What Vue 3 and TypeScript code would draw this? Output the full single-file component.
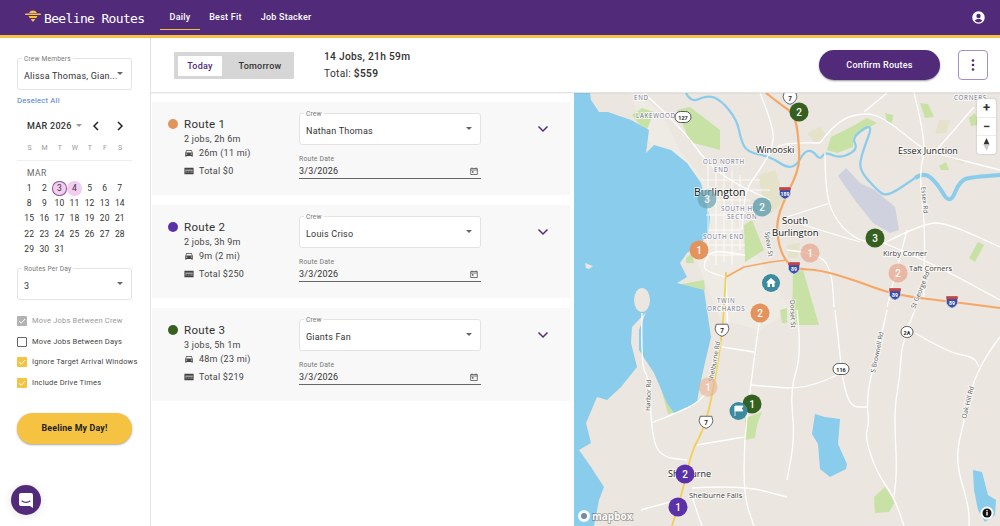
<script setup lang="ts">
type P = [number, number]
const smooth = (p: P[]): string => {
  let d = `M${p[0][0]} ${p[0][1]}`
  for (let i = 1; i < p.length - 1; i++) {
    const mx = (p[i][0] + p[i + 1][0]) / 2
    const my = (p[i][1] + p[i + 1][1]) / 2
    d += ` Q${p[i][0]} ${p[i][1]} ${mx} ${my}`
  }
  const l = p[p.length - 1]
  return d + ` L${l[0]} ${l[1]}`
}
const days = Array.from({ length: 31 }, (_, i) => i + 1)
const routes = [
  { name: 'Route 1', color: '#e4935c', jobs: '2 jobs, 2h 6m', drive: '26m (11 mi)', total: 'Total $0', crew: 'Nathan Thomas' },
  { name: 'Route 2', color: '#5a31a8', jobs: '2 jobs, 3h 9m', drive: '9m (2 mi)', total: 'Total $250', crew: 'Louis Criso' },
  { name: 'Route 3', color: '#35601f', jobs: '3 jobs, 5h 1m', drive: '48m (23 mi)', total: 'Total $219', crew: 'Giants Fan' },
]
const checks = [
  { label: 'Move Jobs Between Crew', state: 'disabled' },
  { label: 'Move Jobs Between Days', state: 'off' },
  { label: 'Ignore Target Arrival Windows', state: 'on' },
  { label: 'Include Drive Times', state: 'on' },
]
const river1 = smooth([[686,93],[691,103],[707,95],[721,100],[737,120],[741,140],[747,152],[771,157],[787,168],[797,165],[804,152],[812,150],[820,160],[825,152],[839,158],[852,153],[857,147],[852,137],[874,122],[862,153],[859,170],[877,190],[887,197],[915,178]])
const river2 = smooth([[915,178],[924,172],[937,183],[950,205],[960,180],[974,177],[1000,175]])
const lake = 'M574 93 L590 93 L591 100 L599 112 L608 112 L631 120 L649 130 L646 153 L654 145 L671 150 L687 163 L701 183 L706 203 L710 217 L708 237 L687 253 L680 263 L687 277 L677 283 L704 290 L707 310 L711 337 L704 367 L699 390 L697 403 L674 413 L667 403 L654 373 L639 350 L639 330 L646 312 L632 327 L631 343 L637 367 L621 387 L607 400 L597 397 L586 423 L591 443 L579 450 L591 467 L604 487 L599 500 L594 526 L574 526 Z'
const greens = [
  '632,115 642,108 654,112 646,132 640,125','677,110 690,107 720,130 720,150 690,142','827,150 831,137 851,127 867,118 877,123 853,137 853,147 837,153',
  '920,103 928,104 934,117 925,118','885,113 893,115 892,123 887,122','939,166 946,162 949,170 941,170','969,118 975,113 979,125 971,126',
  '744,225 752,220 764,250 745,262','686,258 692,253 694,263 686,263','677,285 704,280 705,290 685,290',
  '745,418 762,412 757,425 755,438 745,440','658,378 668,395 676,412 668,414','874,497 885,487 895,502 889,512 875,513',
  '969,258 978,242 984,245 975,262','793,272 803,270 819,325 792,325','780,310 787,308 787,323 782,323',
]
const tans = ['807,133 820,127 827,137 815,143','939,120 950,120 946,133 935,134','758,176 775,170 785,200 770,215 762,195','787,245 800,243 798,258 788,258','898,150 906,155 900,157','957,160 968,159 962,164','956,490 0,0']
const roads = [
  [[887,310],[880,343],[869,383],[867,407],[869,423],[865,438],[877,473],[894,497],[904,526]],
  [[915,310],[902,340],[900,377],[894,410],[897,470],[894,497]],
  [[835,310],[840,353],[842,377],[850,407],[867,407]],
  [[787,388],[807,388],[842,373]],
  [[1000,337],[977,367],[964,420],[955,460],[969,507],[969,526]],
  [[915,333],[947,352],[974,357],[979,367]],
  [[797,310],[802,353],[790,390],[795,437],[787,480]],
  [[759,323],[751,383],[744,440],[744,497],[754,526]],
  [[642,313],[641,367],[649,377],[652,437],[661,457],[687,460]],
  [[651,423],[691,408],[707,393]],
  [[697,445],[744,437]],
  [[722,347],[754,352]],
  [[751,385],[787,388]],
  [[692,488],[741,485],[787,497]],
  [[641,510],[677,500]],
  [[692,497],[702,526]],
  [[644,93],[681,127],[707,163],[734,183],[770,200]],
  [[820,143],[837,120],[867,112],[887,120],[920,147],[934,153],[1000,170]],
  [[914,93],[927,143],[919,173],[925,223],[924,297]],
  [[820,143],[787,142],[771,150],[760,170],[745,190],[742,230]],
  [[887,93],[864,112]],
  [[825,153],[825,193],[837,223],[860,242],[884,243]],
  [[787,217],[830,203]],
  [[787,250],[820,253],[832,273],[834,307]],
  [[787,220],[860,242]],
  [[884,243],[924,223],[947,223],[1000,247]],
  [[907,230],[887,307]],
  [[934,153],[974,107]],
  [[884,243],[930,262],[1000,300]],
  [[726,277],[705,272],[704,262],[712,250],[745,255]],
  [[726,277],[728,330]],
  [[760,93],[775,130],[771,150]],
].map((r) => smooth(r as P[]))
const gridLines = ['M708 165V260','M716 160V265','M724 165V262','M732 170V265','M740 175V250','M702 180H760','M704 190H770','M706 200H750','M706 215H745','M708 230H740','M704 245H745','M712 255H745']
const labels = [
  { x: 636, y: 118, t: 'LAKEWOOD', c: 'hood' },
  { x: 703, y: 164, t: 'OLD NORTH', c: 'hood' },
  { x: 714, y: 172, t: 'END', c: 'hood' },
  { x: 634, y: 99.5, t: 'END', c: 'hood' },
  { x: 721, y: 211, t: 'SOUTH HILL', c: 'hood' },
  { x: 727, y: 219, t: 'SECTION', c: 'hood' },
  { x: 703, y: 239, t: 'SOUTH END', c: 'hood' },
  { x: 717, y: 303, t: 'TWIN', c: 'hood' },
  { x: 707, y: 311, t: 'ORCHARDS', c: 'hood' },
  { x: 954, y: 99.5, t: 'CORNERS', c: 'hood' },
  { x: 694, y: 196, t: 'Burlington', c: 'city' },
  { x: 756, y: 153, t: 'Winooski', c: 'town' },
  { x: 782, y: 224, t: 'South', c: 'city small' },
  { x: 772, y: 236, t: 'Burlington', c: 'city small' },
  { x: 898, y: 154, t: 'Essex Junction', c: 'town' },
  { x: 883, y: 256, t: 'Kirby Corner', c: 'place' },
  { x: 909, y: 271, t: 'Taft Corners', c: 'place' },
  { x: 668, y: 477, t: 'Shelburne', c: 'town' },
  { x: 689, y: 498, t: 'Shelburne Falls', c: 'place' },
]
const rotated = [
  { x: 765, y: 232, r: 82, t: 'Spear St' },
  { x: 921, y: 187, r: 84, t: 'Essex Rd' },
  { x: 790, y: 300, r: 88, t: 'Dorset St' },
  { x: 713, y: 382, r: -80, t: 'Shelburne Rd' },
  { x: 650, y: 411, r: -88, t: 'Harbor Rd' },
  { x: 875, y: 373, r: -78, t: 'S Brownell Rd' },
  { x: 966, y: 419, r: -76, t: 'Oak Hill Rd' },
  { x: 915, y: 309, r: -68, t: 'St George Rd' },
]
const shields = [
  { x: 785, y: 193, t: '189', c: 'i' }, { x: 794, y: 268, t: '89', c: 'i' }, { x: 895, y: 294, t: '89', c: 'i' }, { x: 952, y: 302, t: '89', c: 'i' },
  { x: 722, y: 330, t: '7', c: 'u' }, { x: 706, y: 422, t: '7', c: 'u' }, { x: 790, y: 98, t: '7', c: 'u' },
]
const ovals = [{ x: 683, y: 117, t: '127', w: 8 }, { x: 841, y: 369, t: '116', w: 8 }, { x: 907, y: 332, t: '2A', w: 6 }]
const pins = [
  { x: 707, y: 199, t: '3', c: '#6fa6b5', o: 0.75 }, { x: 762, y: 207, t: '2', c: '#5f9fae', o: 0.8 },
  { x: 810, y: 253, t: '1', c: '#e8a58c', o: 0.7 }, { x: 898, y: 273, t: '2', c: '#e8a58c', o: 0.7 },
  { x: 708, y: 387, t: '1', c: '#e8b493', o: 0.6 }, { x: 699, y: 250, t: '1', c: '#e4935c', o: 1 },
  { x: 760, y: 313, t: '2', c: '#e4935c', o: 1 }, { x: 799, y: 112, t: '2', c: '#35601f', o: 1 },
  { x: 875, y: 238, t: '3', c: '#35601f', o: 1 }, { x: 752, y: 404, t: '1', c: '#35601f', o: 1 },
  { x: 685, y: 474, t: '2', c: '#5a31a8', o: 1 }, { x: 678, y: 507, t: '1', c: '#5a31a8', o: 1 },
]
</script>

<template>
  <div class="app">
    <header class="topnav">
      <div class="brand">
        <svg width="16" height="14" viewBox="0 0 16 14" class="logo">
          <path d="M4 4 A4.5 4.5 0 0 1 12 4 Z" fill="#f5c242" />
          <rect x="0" y="4.6" width="16" height="1.4" rx=".7" fill="#f5c242" />
          <path d="M3.6 7 H12.4 L11.4 9 H4.6 Z" fill="#f5c242" />
          <path d="M5.6 10 H10.4 L8 13 Z" fill="#f5c242" />
        </svg>
        <span>Beeline Routes</span>
      </div>
      <nav class="tabs">
        <a class="tab active">Daily</a>
        <a class="tab">Best Fit</a>
        <a class="tab">Job Stacker</a>
      </nav>
      <svg class="avatar" width="15" height="15" viewBox="0 0 24 24"><path fill="#fff" d="M12 2a10 10 0 1 0 0 20 10 10 0 0 0 0-20zm0 4a3.5 3.5 0 1 1 0 7 3.5 3.5 0 0 1 0-7zm0 14a8 8 0 0 1-6-2.8c.6-1.9 3.6-2.9 6-2.9s5.400 1 6 2.900A8 8 0 0 1 12 20z"/></svg>
    </header>

    <div class="body">
      <aside class="side">
        <div class="field">
          <span class="legend">Crew Members</span>
          <span class="value">Alissa Thomas, Gian...</span>
          <i class="caret"></i>
        </div>
        <a class="deselect">Deselect All</a>

        <div class="cal-head">
          <span class="cal-month">MAR 2026</span><i class="caret small"></i>
          <svg class="nav-a" width="8" height="10" viewBox="0 0 8 10"><path d="M6 1 2 5l4 4" fill="none" stroke="#222" stroke-width="1.500"/></svg>
          <svg class="nav-b" width="8" height="10" viewBox="0 0 8 10"><path d="M2 1l4 4-4 4" fill="none" stroke="#222" stroke-width="1.500"/></svg>
        </div>
        <div class="weekdays"><span v-for="(d, i) in ['S','M','T','W','T','F','S']" :key="i">{{ d }}</span></div>
        <div class="cal-name">MAR</div>
        <div class="days">
          <span v-for="d in days" :key="d" class="day" :class="{ today: d === 3, sel: d === 4 }">{{ d }}</span>
        </div>

        <div class="field per-day">
          <span class="legend">Routes Per Day</span>
          <span class="value">3</span>
          <i class="caret"></i>
        </div>

        <div class="checks">
          <label v-for="c in checks" :key="c.label" class="check" :class="c.state">
            <span class="box">
              <svg v-if="c.state !== 'off'" width="10" height="10" viewBox="0 0 10 10"><path d="M2 5.200 4.200 7.200 8 3" fill="none" stroke="#fff" stroke-width="1"/></svg>
            </span>
            {{ c.label }}
          </label>
        </div>
        <button class="beeline">Beeline My Day!</button>
        <div class="chat">
          <svg width="14" height="15" viewBox="0 0 14 15"><path d="M2 0h10a2 2 0 0 1 2 2v13l-3-2H2a2 2 0 0 1-2-2V2a2 2 0 0 1 2-2z" fill="#fff"/><path d="M3 8c2 1.800 6 1.800 8 0" fill="none" stroke="#512b7a" stroke-width="1.100" stroke-linecap="round"/></svg>
        </div>
      </aside>

      <main class="content">
        <section class="bar">
          <div class="toggle">
            <span class="opt on">Today</span>
            <span class="opt alt">Tomorrow</span>
          </div>
          <div class="summary">
            <div class="s1">14 Jobs, 21h 59m</div>
            <div class="s2">Total: <b>$559</b></div>
          </div>
          <button class="confirm">Confirm Routes</button>
          <button class="more">
            <svg width="4" height="14" viewBox="0 0 4 14"><circle cx="2" cy="2.500" r="1.300" fill="#512b7a"/><circle cx="2" cy="7" r="1.300" fill="#512b7a"/><circle cx="2" cy="11.500" r="1.300" fill="#512b7a"/></svg>
          </button>
        </section>

        <section class="split">
          <div class="list">
            <article v-for="r in routes" :key="r.name" class="card">
              <div class="info">
                <div class="title"><i class="dot" :style="{ background: r.color }"></i>{{ r.name }}</div>
                <div class="jobs">{{ r.jobs }}</div>
                <div class="stat first">
                  <svg width="10" height="10" viewBox="0 0 24 24"><path fill="#444" d="M18.900 6c-.2-.6-.8-1-1.400-1h-11c-.7 0-1.200.4-1.400 1L3 12v8c0 .6.400 1 1 1h1c.6 0 1-.4 1-1v-1h12v1c0 .6.400 1 1 1h1c.6 0 1-.4 1-1v-8l-2.100-6zM6.500 16a1.500 1.500 0 1 1 0-3 1.500 1.500 0 0 1 0 3zm11 0a1.500 1.500 0 1 1 0-3 1.500 1.500 0 0 1 0 3zM5 11l1.500-4.500h11L19 11H5z"/></svg>
                  {{ r.drive }}
                </div>
                <div class="stat">
                  <svg width="10" height="10" viewBox="0 0 24 24"><path fill="#444" d="M1 4h22v16H1V4zm2 5v2h18V9H3zm0 4v1h4v-1H3zm6 0v1h4v-1H9zm6 0v1h6v-1h-6zM3 16v1h4v-1H3zm6 0v1h4v-1H9zm6 0v1h6v-1h-6z"/></svg>
                  {{ r.total }}
                </div>
              </div>
              <div class="forms">
                <div class="field crew">
                  <span class="legend">Crew</span>
                  <span class="value">{{ r.crew }}</span>
                  <i class="caret"></i>
                </div>
                <div class="date">
                  <span class="date-label">Route Date</span>
                  <span class="date-val">3/3/2026</span>
                  <svg class="cal-ic" width="8" height="8" viewBox="0 0 8 8"><path d="M.7 1.500h6.600v6H.7zM.7 3h6.600M2 .5v1M6 .5v1" fill="none" stroke="#555" stroke-width=".8"/><rect x="2" y="4.200" width="1.500" height="1.500" fill="#555"/></svg>
                </div>
              </div>
              <svg class="chev" width="12" height="8" viewBox="0 0 12 8"><path d="M1.500 1.500 6 6l4.500-4.500" fill="none" stroke="#512b7a" stroke-width="1.500"/></svg>
            </article>
          </div>

          <div class="map">
            <svg class="map-svg" width="426" height="433" viewBox="574 93 426 433">
              <rect x="574" y="93" width="426" height="433" fill="#ebe6df"/>
              <path d="M630 93 C660 100 670 130 680 150 L720 200 L760 260 L790 310 L760 330 L720 320 Z" fill="#eeeae4"/>
              <polygon points="838,176 846,168 860,183 875,190 895,207 899,230 890,233 873,223 857,203" fill="#cfd2de"/>
              <polygon v-for="(g, i) in tans" :key="'t' + i" :points="g" fill="#e4e2c9"/>
              <polygon v-for="(g, i) in greens" :key="'g' + i" :points="g" fill="#c8e2a6"/>
              <path :d="lake" fill="#8accec"/>
              <ellipse cx="642" cy="300" rx="8" ry="12" fill="#ebe6df"/>
              <polygon points="585,263 593,266 589,269 586,268" fill="#ebe6df"/>
              <polygon points="815,415 825,418 840,420 838,445 847,465 846,470 830,478 820,470 818,445 812,435" fill="#8accec" transform="translate(0 -1)"/>
              <polygon points="973,470 982,472 988,495 996,500 995,515 985,522 978,510 974,490" fill="#8accec"/>
              <path :d="river1" fill="none" stroke="#8accec" stroke-width="2.200" stroke-linejoin="round"/>
              <path :d="river2" fill="none" stroke="#8accec" stroke-width="4" stroke-linejoin="round"/>
              <path v-for="(d, i) in gridLines" :key="'l' + i" :d="d" fill="none" stroke="#fff" stroke-width=".8"/>
              <path v-for="(d, i) in roads" :key="'r' + i" :d="d" fill="none" stroke="#fff" stroke-width="1.300" stroke-linejoin="round"/>
              <g fill="none" stroke-linejoin="round">
                <path :d="smooth([[766,93],[781,105],[796,115],[800,157],[797,173],[789,190],[776,220],[779,247],[787,263],[797,269],[820,270],[854,280],[894,295],[954,302],[1000,308]])" stroke="#f6a765" stroke-width="2.200"/>
                <path d="M787 260 L771 262 L744 267 L726 277" stroke="#f6a765" stroke-width="1.600"/>
                <path :d="smooth([[726,272],[724,310],[721,343],[711,403],[702,433],[692,450],[681,497],[672,526]])" stroke="#f2cf5a" stroke-width="1.800"/>
              </g>
              <text v-for="l in labels" :key="l.t + l.x" :x="l.x" :y="l.y" class="lbl" :class="l.c">{{ l.t }}</text>
              <text v-for="l in rotated" :key="l.t" :transform="`translate(${l.x} ${l.y}) rotate(${l.r})`" class="lbl road">{{ l.t }}</text>
              <g v-for="s in shields" :key="s.t + s.x" :transform="`translate(${s.x} ${s.y}) scale(1.150)`">
                <template v-if="s.c === 'i'">
                  <path d="M-5 -5 H5 V1 Q4 4 0 5.500 Q-4 4 -5 1 Z" fill="#3a4fa3" stroke="#fff" stroke-width=".6"/>
                  <rect x="-5" y="-5" width="10" height="2.500" fill="#c8443f"/>
                  <text y="2.500" class="sh-i">{{ s.t }}</text>
                </template>
                <template v-else>
                  <path d="M-5 -5 H5 L6 -1 Q5 4 0 5.500 Q-5 4 -6 -1 Z" fill="#fff" stroke="#444" stroke-width=".7"/>
                  <text y="2.500" class="sh-u">{{ s.t }}</text>
                </template>
              </g>
              <g v-for="o in ovals" :key="o.t">
                <rect :x="o.x - o.w" :y="o.y - 5.500" :width="o.w * 2" height="11" rx="5.500" fill="#fff" stroke="#333" stroke-width=".8"/>
                <text :x="o.x" :y="o.y + 2.500" class="sh-u">{{ o.t }}</text>
              </g>
              <g v-for="p in pins" :key="p.x" :opacity="p.o">
                <circle :cx="p.x" :cy="p.y" r="9.500" :fill="p.c"/>
                <text :x="p.x" :y="p.y + 3.500" class="pin-t">{{ p.t }}</text>
              </g>
              <circle cx="771" cy="283" r="9" fill="#3a8b9f"/>
              <path d="M771 278 L776 282.500 H774.500 V287 H772 V284 H770 V287 H767.500 V282.500 H766 Z" fill="#fff"/>
              <circle cx="738.500" cy="411" r="9" fill="#3a8b9f"/>
              <path d="M735 406 V416 M735 406 H743 L741.500 408.500 L743 411 H735 Z" fill="#fff" stroke="#fff" stroke-width=".8"/>
              <circle cx="584" cy="516" r="6" fill="#fff" opacity=".9"/>
              <circle cx="584" cy="516" r="3" fill="#7d8a90"/>
              <text x="592" y="520" class="mapbox">mapbox</text>
              <circle cx="987" cy="513" r="6.500" fill="#fff"/>
              <circle cx="987" cy="513" r="4.500" fill="#111"/>
              <rect x="986.300" y="512" width="1.400" height="3.500" fill="#fff"/><rect x="986.300" y="510" width="1.400" height="1.300" fill="#fff"/>
            </svg>
            <div class="zoom">
              <span class="zbtn">+</span>
              <span class="zbtn">−</span>
              <span class="zbtn">
                <svg width="7" height="13" viewBox="0 0 7 13"><path d="M3.500 0 6.500 6.500H.5z" fill="#333"/><path d="M3.500 13 .5 6.500h6z" fill="#ccc"/></svg>
              </span>
            </div>
          </div>
        </section>
      </main>
    </div>
  </div>
</template>

<style>
html, body { margin: 0; background: #fff; overflow: hidden; }
</style>

<style scoped>
.app { width: 1000px; height: 526px; display: flex; flex-direction: column; font-family: Roboto, "Liberation Sans", sans-serif; color: #2a2a2a; overflow: hidden; }
.topnav { height: 35px; flex: none; background: #512b7a; border-bottom: 3px solid #f5c242; display: flex; align-items: center; padding: 0 14px 0 25px; }
.brand { display: flex; align-items: center; gap: 3px; color: #fff; width: 135px; font: 13px "DejaVu Sans Mono", monospace; letter-spacing: -.65px; padding-top: 2px; }
.logo { margin-top: -5px; }
.tabs { display: flex; align-self: stretch; }
.tab { display: flex; align-items: center; justify-content: center; color: #fff; font-size: 9px; font-weight: 500; letter-spacing: .25px; white-space: nowrap; position: relative; padding-bottom: 1px; }
.tab:first-child { width: 40px; margin-right: 10px; }
.tab:nth-child(2) { width: 31px; margin-right: 20px; }
.tab:nth-child(3) { width: 50px; }
.tab.active::after { content: ""; position: absolute; left: 0; right: 0; bottom: 5px; height: 1.500px; background: #f5c242; }
.avatar { margin-left: auto; }
.body { flex: 1; display: flex; min-height: 0; }
.side { width: 151px; flex: none; border-right: 1px solid #e2e2e2; padding: 20px 18px 0 17px; box-sizing: border-box; position: relative; }
.field { height: 32px; border: 1px solid #e3e3e3; border-radius: 3px; position: relative; display: flex; align-items: center; padding: 4px 7px 0 6px; box-sizing: border-box; }
.legend { position: absolute; top: -4px; left: 4px; padding: 0 2px; background: #fff; font-size: 6.600px; line-height: 8px; color: #777; letter-spacing: .2px; }
.value { font-size: 9px; letter-spacing: .22px; color: #333; white-space: nowrap; }
.caret { position: absolute; right: 8px; top: 13px; width: 0; height: 0; border: 3px solid transparent; border-top: 3.500px solid #666; border-bottom: 0; }
.caret.small { position: static; display: inline-block; margin: 0 0 1px 4px; border-top-color: #999; }
.deselect { display: block; margin-top: 6px; font-size: 7.700px; line-height: 9px; color: #4a7fc4; letter-spacing: .2px; }
.cal-head { position: relative; display: flex; align-items: center; margin: 14px 0 0 10px; height: 13px; }
.cal-month { font-size: 9px; font-weight: 500; letter-spacing: .3px; color: #333; }
.nav-a { position: absolute; left: 65px; }
.nav-b { position: absolute; left: 89px; }
.weekdays { display: grid; grid-template-columns: repeat(7, 15.100px); padding: 0 0 7px 5px; margin-top: 12px; border-bottom: 1px solid #eee; width: 115px; box-sizing: border-box; font-size: 7px; line-height: 9px; color: #999; text-align: center; }
.cal-name { margin: 7px 0 0 10px; font-size: 8.500px; line-height: 10px; letter-spacing: .5px; color: #666; }
.days { display: grid; grid-template-columns: repeat(7, 15.100px); grid-auto-rows: 15.100px; padding-left: 5px; margin-top: 3px; font-size: 8.500px; letter-spacing: .15px; text-align: center; color: #333; }
.days .day { display: flex; align-items: center; justify-content: center; border-radius: 50%; width: 14.500px; height: 14.500px; }
.day.today { background: #f3cdf0; box-shadow: inset 0 0 0 1px #8a5a94; }
.day.sel { background: #f3cdf0; }
.per-day { margin-top: 12px; }
.checks { margin-top: 16px; display: flex; flex-direction: column; gap: 10.500px; }
.check { display: flex; align-items: center; gap: 5px; font-size: 7.500px; line-height: 10px; letter-spacing: .2px; color: #444; white-space: nowrap; }
.check.disabled { color: #999; }
.box { width: 10px; height: 10px; border-radius: 1px; flex: none; box-sizing: border-box; display: block; }
.box svg { display: block; }
.check.disabled .box { background: #b3b3b3; }
.check.off .box { border: 1px solid #666; }
.check.on .box { background: #f5c242; }
.beeline { display: block; margin-top: 25px; width: 115px; height: 31px; border: 0; border-radius: 16px; background: #f5c242; box-shadow: 0 1px 2px rgba(0,0,0,.35); font: 700 8.800px Roboto, sans-serif; letter-spacing: .2px; color: #222; padding: 0; }
.chat { position: absolute; left: 11px; bottom: 11px; width: 30px; height: 30px; border-radius: 50%; background: #512b7a; display: flex; align-items: center; justify-content: center; box-shadow: 0 1px 8px rgba(0,0,0,.12); }
.content { flex: 1; display: flex; flex-direction: column; min-width: 0; }
.bar { height: 55px; flex: none; border-bottom: 1px solid #e4e4e4; box-sizing: border-box; display: flex; align-items: center; padding: 0 12px 0 23px; box-shadow: 0 1px 1px rgba(0,0,0,.04); position: relative; z-index: 1; }
.toggle { width: 120px; height: 27px; background: #d6d6d6; border-radius: 1px; display: flex; align-items: center; padding: 0 3px 0 4px; box-sizing: border-box; margin-top: 1px; }
.opt { flex: 1; text-align: center; font-size: 9px; font-weight: 500; letter-spacing: .25px; color: #333; line-height: 20px; }
.opt.alt { padding-left: 7px; }
.opt.on { flex: none; width: 44px; background: #fff; color: #512b7a; border-radius: 1px; }
.summary { margin-left: 30px; display: flex; flex-direction: column; gap: 3px; }
.s1, .s2 { font-size: 10.200px; line-height: 14px; letter-spacing: .3px; color: #333; font-weight: 500; }
.s2 { font-weight: 400; }
.s2 b { font-weight: 600; }
.confirm { margin-left: auto; width: 121px; height: 30px; border: 0; border-radius: 15px; background: #512b7a; color: #fff; font: 500 9px Roboto, sans-serif; letter-spacing: .25px; box-shadow: 0 1px 2px rgba(0,0,0,.4); padding: 0; }
.more { margin-left: 18px; width: 30px; height: 30px; background: #fff; border: 1px solid #a48fc2; border-radius: 4px; display: flex; align-items: center; justify-content: center; padding: 0; }
.split { flex: 1; display: flex; min-height: 0; }
.list { width: 423px; flex: none; padding: 9px 4px 0 1px; box-sizing: border-box; display: flex; flex-direction: column; gap: 10px; }
.card { height: 93px; background: #f8f8f8; display: flex; padding: 11px 0 0 16px; box-sizing: border-box; position: relative; }
.info { width: 131px; flex: none; padding-top: 3px; }
.title { display: flex; align-items: center; font-size: 11.500px; line-height: 16px; letter-spacing: .3px; color: #333; }
.dot { width: 10px; height: 10px; border-radius: 50%; margin-right: 6px; }
.jobs { font-size: 9px; line-height: 12px; letter-spacing: .25px; padding-left: 16px; margin-top: 1px; color: #444; }
.stat { display: flex; align-items: center; gap: 5px; font-size: 9px; line-height: 12px; letter-spacing: .25px; padding-left: 16px; margin-top: 6px; color: #444; }
.stat.first { margin-top: 2px; }
.forms { width: 182px; }
.crew { height: 32px; background: #fff; }
.crew .legend { background: linear-gradient(#f8f8f8 50%, #fff 50%); }
.date { position: relative; border-bottom: 1px solid #666; height: 23px; margin-top: 10px; }
.date-label { display: block; font-size: 6.800px; line-height: 9px; color: #777; letter-spacing: .2px; }
.date-val { display: block; font-size: 9px; line-height: 13px; margin-top: 1px; letter-spacing: .2px; color: #333; }
.cal-ic { position: absolute; right: 3px; top: 12px; }
.chev { position: absolute; left: 385px; top: 23px; }
.map { flex: 1; position: relative; overflow: hidden; min-width: 0; }
.map-svg { display: block; }
.lbl { font-family: "Open Sans", "Noto Sans", sans-serif; fill: #333; stroke: rgba(255,255,255,.7); stroke-width: 2px; paint-order: stroke; }
.hood { font-size: 6.200px; letter-spacing: .7px; fill: #71728f; }
.city { font-size: 10.500px; fill: #111; font-weight: 500; }
.city.small { font-size: 9.500px; }
.town { font-size: 9px; fill: #222; }
.place { font-size: 7.500px; fill: #444; }
.road { font-size: 6.500px; fill: #555; }
.sh-i { font: 700 4.500px Roboto, sans-serif; fill: #fff; text-anchor: middle; }
.sh-u { font: 700 5.500px Roboto, sans-serif; fill: #222; text-anchor: middle; }
.pin-t { font: 500 10px Roboto, sans-serif; fill: #fff; text-anchor: middle; }
.mapbox { font: 700 10px "Open Sans", sans-serif; fill: #fff; stroke: rgba(70,70,70,.5); stroke-width: 1.500px; paint-order: stroke; }
.zoom { position: absolute; top: 6px; left: 403px; width: 19px; background: #fff; border-radius: 3px; box-shadow: 0 0 2px rgba(0,0,0,.25); display: flex; flex-direction: column; }
.zbtn { height: 17.500px; display: flex; align-items: center; justify-content: center; font: 700 13px Roboto, sans-serif; color: #333; border-bottom: 1px solid #ececec; }
.zbtn:last-child { border-bottom: 0; }
</style>
